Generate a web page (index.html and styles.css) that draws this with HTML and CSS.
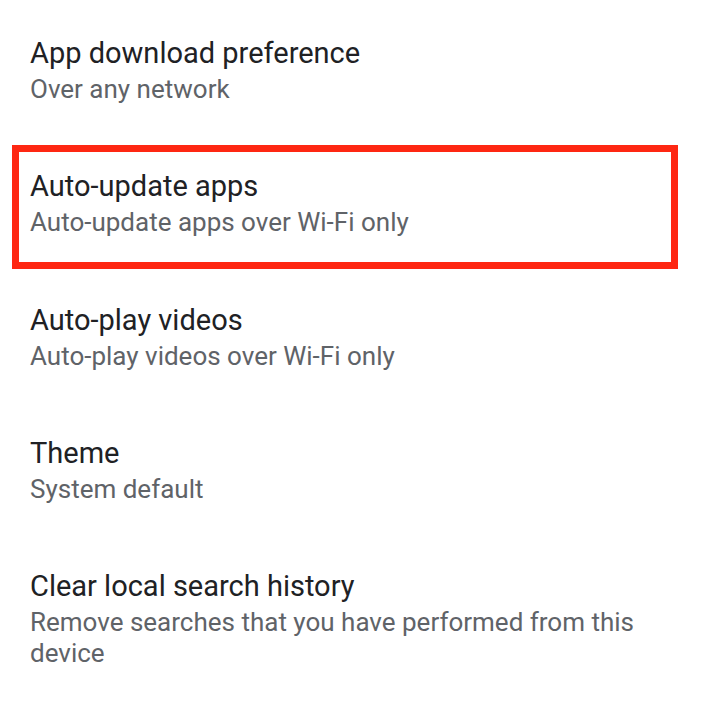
FILE: index.html
```html
<!DOCTYPE html>
<html lang="en">

<head>
    <meta charset="UTF-8">
    <meta name="viewport" content="width=device-width, initial-scale=1.0">
    <title>Settings</title>
    <link rel="stylesheet" href="styles.css">
</head>

<body>
    <div class="settings">
        <div class="setting">
            <div class="setting-title">App download preference</div>
            <div class="setting-summary">Over any network</div>
        </div>
        <div class="setting highlighted">
            <div class="setting-title">Auto-update apps</div>
            <div class="setting-summary">Auto-update apps over Wi-Fi only</div>
            <div class="marker"></div>
        </div>
        <div class="setting">
            <div class="setting-title">Auto-play videos</div>
            <div class="setting-summary">Auto-play videos over Wi-Fi only</div>
        </div>
        <div class="setting">
            <div class="setting-title">Theme</div>
            <div class="setting-summary">System default</div>
        </div>
        <div class="setting">
            <div class="setting-title">Clear local search history</div>
            <div class="setting-summary">Remove searches that you have performed from this device</div>
        </div>
    </div>
</body>

</html>
```

FILE: styles.css
```css
body {
    margin: 0;
    background: #fff;
    font-family: Roboto, 'Noto Sans', sans-serif;
}

.settings {
    display: flex;
    flex-direction: column;
}

.setting {
    position: relative;
    height: 133.3px;
    box-sizing: border-box;
    padding: 33px 60px 0 30px;
}

.setting-title {
    font-size: 29px;
    line-height: 41px;
    color: #202124;
}

.setting-summary {
    font-size: 26px;
    line-height: 31px;
    color: #5f6368;
}

.marker {
    position: absolute;
    top: 12px;
    left: 12px;
    width: 666px;
    height: 124px;
    box-sizing: border-box;
    border: 7px solid #fe2712;
}
```
